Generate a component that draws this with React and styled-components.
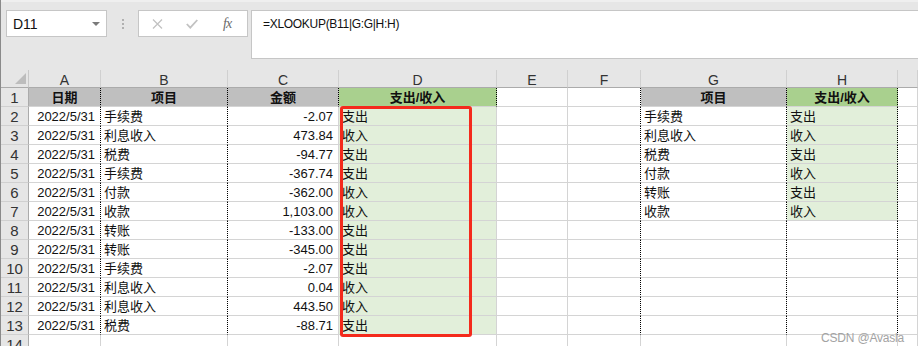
import React from "react";
import styled, { createGlobalStyle } from "styled-components";

const GlobalStyle = createGlobalStyle`
  html, body {
    margin: 0;
    padding: 0;
    background: #ffffff;
    overflow: hidden;
  }
  * {
    box-sizing: border-box;
  }
`;

const COLS = [28, 72, 127, 111, 158, 71, 73, 146, 111, 20];
const LETTERS = ["A", "B", "C", "D", "E", "F", "G", "H", ""];

const data = [
  ["2022/5/31", "手续费", "-2.07", "支出", "手续费", "支出"],
  ["2022/5/31", "利息收入", "473.84", "收入", "利息收入", "收入"],
  ["2022/5/31", "税费", "-94.77", "支出", "税费", "支出"],
  ["2022/5/31", "手续费", "-367.74", "支出", "付款", "收入"],
  ["2022/5/31", "付款", "-362.00", "收入", "转账", "支出"],
  ["2022/5/31", "收款", "1,103.00", "收入", "收款", "收入"],
  ["2022/5/31", "转账", "-133.00", "支出"],
  ["2022/5/31", "转账", "-345.00", "支出"],
  ["2022/5/31", "手续费", "-2.07", "支出"],
  ["2022/5/31", "利息收入", "0.04", "收入"],
  ["2022/5/31", "利息收入", "443.50", "收入"],
  ["2022/5/31", "税费", "-88.71", "支出"],
];

const Window = styled.div`
  width: 918px;
  height: 346px;
  border-left: 1px solid #8a8a8a;
  font-family: "Liberation Sans", "Noto Sans CJK SC", sans-serif;
  overflow: hidden;
`;

const TopBar = styled.div`
  height: 70px;
  background: #e6e6e6;
  border-top: 2px solid #efefef;
  display: flex;
  align-items: flex-start;
  padding: 8px 0 0 5px;
`;

const NameBox = styled.div`
  width: 101px;
  height: 27px;
  background: #fff;
  border: 1px solid #c6c6c6;
  display: flex;
  align-items: center;
  justify-content: space-between;
  padding: 0 6px 0 6px;
  font-size: 14px;
  color: #111;
`;

const Caret = styled.span`
  width: 0;
  height: 0;
  border-left: 4px solid transparent;
  border-right: 4px solid transparent;
  border-top: 4px solid #7a7a7a;
`;

const Grip = styled.div`
  width: 31px;
  height: 27px;
  display: flex;
  flex-direction: column;
  align-items: center;
  justify-content: center;
  gap: 2px;
  span {
    width: 2px;
    height: 2px;
    background: #b0b0b0;
  }
`;

const FxGroup = styled.div`
  width: 110px;
  height: 27px;
  background: #fff;
  border: 1px solid #c6c6c6;
  display: flex;
  align-items: center;
  padding-left: 13px;
  gap: 23px;
`;

const FxMark = styled.span`
  font-family: "Liberation Serif", serif;
  font-style: italic;
  font-size: 14px;
  color: #6a6a6a;
  letter-spacing: -1px;
  margin-left: 2px;
`;

const Formula = styled.div`
  flex: 1;
  height: 49px;
  margin-left: 3px;
  background: #fff;
  border: 1px solid #c6c6c6;
  border-right: none;
  padding: 6px 0 0 11px;
  font-size: 12px;
  letter-spacing: -0.3px;
  color: #111;
`;

const Sheet = styled.div`
  position: relative;
  display: grid;
  grid-template-columns: ${COLS.map((w) => w + "px").join(" ")};
  grid-template-rows: 18px repeat(14, 19px);
`;

const Corner = styled.div`
  background: #e6e6e6;
  border-right: 1px solid #c8c8c8;
  border-bottom: 1px solid #ababab;
  position: relative;
  &::after {
    content: "";
    position: absolute;
    right: 2px;
    bottom: 3px;
    border-left: 11px solid transparent;
    border-bottom: 11px solid #bdbdbd;
  }
`;

const ColHead = styled.div`
  background: #e6e6e6;
  border-right: 1px solid #d0d0d0;
  border-bottom: 1px solid #ababab;
  font-size: 14px;
  color: #333;
  text-align: center;
  line-height: 20px;
`;

const RowHead = styled.div`
  background: #e6e6e6;
  border-right: 1px solid #ababab;
  border-bottom: 1px solid #d0d0d0;
  font-size: 15px;
  color: #333;
  text-align: center;
  line-height: 20px;
`;

const fills = {
  white: "#ffffff",
  gray: "#bfbfbf",
  green: "#a9d08e",
  light: "#e2efda",
};

const Cell = styled.div`
  background: ${(p) => fills[p.$fill || "white"]};
  border-right: 1px ${(p) => (p.$dotted ? "dotted #000" : "solid #d4d4d4")};
  border-bottom: 1px solid #d4d4d4;
  font-size: 13px;
  font-weight: ${(p) => (p.$bold ? 700 : 400)};
  text-align: ${(p) => p.$align || "left"};
  padding: 1px ${(p) => (p.$align === "right" ? "5px" : "3px")} 0 3px;
  line-height: 18px;
  color: #111;
  white-space: nowrap;
  overflow: hidden;
`;

const Highlight = styled.div`
  position: absolute;
  left: 339px;
  top: 36px;
  width: 132px;
  height: 231px;
  border: 3px solid #f42a1c;
  border-radius: 3px;
  pointer-events: none;
`;

const Watermark = styled.div`
  position: absolute;
  right: 14px;
  bottom: 9px;
  font-size: 12px;
  color: #a3a3a3;
  letter-spacing: -0.2px;
`;

function XIcon() {
  return (
    <svg width="11" height="10" viewBox="0 0 11 10">
      <path d="M1 0.5 L10 9.5 M10 0.5 L1 9.5" stroke="#c2c2c2" strokeWidth="1.3" fill="none" />
    </svg>
  );
}

function CheckIcon() {
  return (
    <svg width="12" height="10" viewBox="0 0 12 10">
      <path d="M0.8 5 L4.3 8.7 L11.3 1" stroke="#c2c2c2" strokeWidth="1.8" fill="none" />
    </svg>
  );
}

// dotted page-break lines sit right of A, B, F, G, H; header row also C, D
const dottedAfter = (col, row) =>
  [1, 2, 6, 7, 8].includes(col) || (row === 1 && [3, 4].includes(col));

function buildRow(r) {
  if (r === 1) {
    return [
      { t: "日期", fill: "gray", align: "center", bold: true },
      { t: "项目", fill: "gray", align: "center", bold: true },
      { t: "金额", fill: "gray", align: "center", bold: true },
      { t: "支出/收入", fill: "green", align: "center", bold: true },
      { t: "" },
      { t: "" },
      { t: "项目", fill: "gray", align: "center", bold: true },
      { t: "支出/收入", fill: "green", align: "center", bold: true },
      { t: "" },
    ];
  }
  const d = data[r - 2];
  if (!d) {
    return Array.from({ length: 9 }, () => ({ t: "" }));
  }
  return [
    { t: d[0], align: "right" },
    { t: d[1] },
    { t: d[2], align: "right" },
    { t: d[3], fill: "light" },
    { t: "" },
    { t: "" },
    { t: d[4] || "" },
    { t: d[5] || "", fill: d[5] ? "light" : "white" },
    { t: "" },
  ];
}

export default function App() {
  const rows = Array.from({ length: 14 }, (_, i) => i + 1);
  return (
    <>
      <GlobalStyle />
      <Window>
        <TopBar>
          <NameBox>
            D11
            <Caret />
          </NameBox>
          <Grip>
            <span />
            <span />
            <span />
          </Grip>
          <FxGroup>
            <XIcon />
            <CheckIcon />
            <FxMark>fx</FxMark>
          </FxGroup>
          <Formula>=XLOOKUP(B11|G:G|H:H)</Formula>
        </TopBar>
        <Sheet>
          <Corner />
          {LETTERS.map((l, i) => (
            <ColHead key={"h" + i}>{l}</ColHead>
          ))}
          {rows.map((r) => (
            <React.Fragment key={r}>
              <RowHead>{r}</RowHead>
              {buildRow(r).map((c, ci) => (
                <Cell
                  key={ci}
                  $fill={c.fill}
                  $align={c.align}
                  $bold={c.bold}
                  $dotted={r <= 13 && dottedAfter(ci + 1, r)}
                >
                  {c.t}
                </Cell>
              ))}
            </React.Fragment>
          ))}
          <Highlight />
          <Watermark>CSDN @Avasla</Watermark>
        </Sheet>
      </Window>
    </>
  );
}
